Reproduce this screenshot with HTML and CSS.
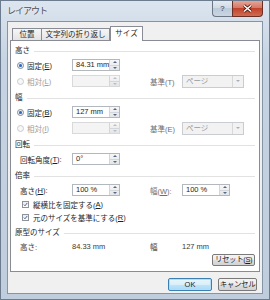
FILE: index.html
```html
<!DOCTYPE html>
<html lang="ja">
<head>
    <meta charset="UTF-8">
    <title>レイアウト</title>
    <link rel="stylesheet" href="styles.css">
</head>
<body>
    <div class="window">
        <div class="titlebar">
            <span class="title">レイアウト</span>
            <div class="caption">
                <span class="cap help">?</span>
                <span class="cap close">
                    <svg width="11" height="9" viewBox="0 0 11 9"><path d="M2 1.5 L9 7.5 M9 1.5 L2 7.5" stroke="#4a1a12" stroke-width="3" fill="none"/><path d="M2 1.5 L9 7.5 M9 1.5 L2 7.5" stroke="#fff" stroke-width="1.6" fill="none"/></svg>
                </span>
            </div>
        </div>

        <div class="client">
            <div class="tabs">
                <span class="tab t1">位置</span>
                <span class="tab t2">文字列の折り返し</span>
                <span class="tab t3 active">サイズ</span>
            </div>

            <div class="panel">
                <div class="head first">高さ</div>
                <div class="row">
                    <span class="c1 opt"><i class="radio on"></i>固定(<u>E</u>)</span>
                    <span class="c2"><span class="num"><span class="val">84.31 mm</span><span class="spin"><b class="up"></b><b class="down"></b></span></span></span>
                </div>
                <div class="row">
                    <span class="c1 opt off"><i class="radio"></i>相対(<u>L</u>)</span>
                    <span class="c2"><span class="num dis"><span class="val"></span><span class="spin"><b class="up"></b><b class="down"></b></span></span></span>
                    <span class="c3">基準(T)</span>
                    <span class="sel"><span class="val">ページ</span><span class="drop"></span></span>
                </div>

                <div class="head">幅</div>
                <div class="row">
                    <span class="c1 opt"><i class="radio on"></i>固定(<u>B</u>)</span>
                    <span class="c2"><span class="num"><span class="val">127 mm</span><span class="spin"><b class="up"></b><b class="down"></b></span></span></span>
                </div>
                <div class="row">
                    <span class="c1 opt off"><i class="radio"></i>相対(<u>I</u>)</span>
                    <span class="c2"><span class="num dis"><span class="val"></span><span class="spin"><b class="up"></b><b class="down"></b></span></span></span>
                    <span class="c3">基準(E)</span>
                    <span class="sel"><span class="val">ページ</span><span class="drop"></span></span>
                </div>

                <div class="head">回転</div>
                <div class="row">
                    <span class="c1 lbl">回転角度(<u>T</u>):</span>
                    <span class="c2"><span class="num"><span class="val">0°</span><span class="spin"><b class="up"></b><b class="down"></b></span></span></span>
                </div>

                <div class="head">倍率</div>
                <div class="row">
                    <span class="c1 lbl">高さ(<u>H</u>):</span>
                    <span class="c2"><span class="num"><span class="val">100 %</span><span class="spin"><b class="up"></b><b class="down"></b></span></span></span>
                    <span class="c3">幅(<u>W</u>):</span>
                    <span class="num"><span class="val">100 %</span><span class="spin"><b class="up"></b><b class="down"></b></span></span>
                </div>
                <div class="check">
                    <i class="box"><svg width="7" height="7" viewBox="0 0 7 7"><path d="M1.2 3.6 L2.8 5.3 L5.9 1.4" stroke="#2f4f80" stroke-width="1.2" fill="none"/></svg></i>縦横比を固定する(<u>A</u>)
                </div>
                <div class="check">
                    <i class="box"><svg width="7" height="7" viewBox="0 0 7 7"><path d="M1.2 3.6 L2.8 5.3 L5.9 1.4" stroke="#2f4f80" stroke-width="1.2" fill="none"/></svg></i>元のサイズを基準にする(<u>R</u>)
                </div>

                <div class="head">原型のサイズ</div>
                <div class="row info">
                    <span class="c1 lbl">高さ:</span>
                    <span class="c2">84.33 mm</span>
                    <span class="c3">幅</span>
                    <span>127 mm</span>
                </div>

                <div class="reset">
                    <button class="btn">リセット(<u>S</u>)</button>
                </div>
            </div>

            <div class="footer">
                <button class="btn ok">OK</button>
                <button class="btn cancel">キャンセル</button>
            </div>
        </div>
    </div>
</body>
</html>
```

FILE: styles.css
```css
* { box-sizing: border-box; }
body { margin: 0; font-family: "Liberation Sans", "Noto Sans CJK JP", sans-serif; font-size: 7.5px; color: #1e1e1e; }
u { text-decoration: underline; text-underline-offset: 1px; }

/* window frame */
.window { width: 270px; height: 300px; border: 1px solid #6c7b8d; background: linear-gradient(#dce5ef, #c6d3e2 60px, #bfcddd); padding: 0 6px 5px; display: flex; flex-direction: column; }
.titlebar { height: 20px; display: flex; justify-content: space-between; align-items: flex-start; }
.title { font-family: "Noto Sans CJK JP", sans-serif; font-size: 9px; letter-spacing: -1px; color: #4a4f57; line-height: 20px; text-shadow: 0 0 3px #eef3f8; }
.caption { display: flex; }
.cap { height: 16px; display: flex; align-items: center; justify-content: center; border: 1px solid #6b7685; border-top: none; }
.help { width: 20px; border-radius: 0 0 0 4px; border-right: none; background: linear-gradient(#e4eaf1, #cfd9e4 50%, #bccad9 50%, #c9d5e2); color: #5c6a7b; font-size: 8px; font-weight: bold; }
.close { width: 31px; border-radius: 0 0 4px 0; border-color: #6a3026; background: linear-gradient(#e6a596, #d57866 45%, #c0432a 50%, #cf6b52); }

.client { flex: 1; background: #f0f0f0; border: 1px solid #8595a8; padding: 0 2px; display: flex; flex-direction: column; }

/* tabs */
.tabs { height: 18px; display: flex; align-items: flex-end; padding-left: 2px; }
.tab { height: 12px; line-height: 11px; text-align: center; border: 1px solid #898c95; border-bottom: none; background: linear-gradient(#f6f6f6, #e4e4e4); color: #1e1e1e; }
.t1 { width: 30px; }
.t2 { width: 69px; margin-left: -1px; }
.t3 { width: 33px; }
.tab.active { height: 15px; line-height: 13px; background: #fff; margin-bottom: -1px; position: relative; z-index: 1; }

.panel { height: 232px; background: #fff; border: 1px solid #898c95; padding: 4px 4px 5px; display: flex; flex-direction: column; }

/* group headings with a rule after them */
.head { height: 12px; line-height: 12px; margin-top: 3px; display: flex; align-items: center; }
.head.first { margin-top: 0; }
.head::after { content: ""; flex: 1; border-top: 1px solid #e2e2e2; margin-left: 4px; }

.row { height: 16px; display: grid; grid-template-columns: 57px 78px 32px auto; align-items: center; }
.c1 { display: flex; align-items: center; white-space: nowrap; }
.opt { padding-left: 2px; }
.lbl { padding-left: 5px; }
.off { color: #9d9d9d; }
.c3 { color: #6e6e6e; white-space: nowrap; }
.row.info { height: 14px; color: #3a3a3a; }
.row.info .c3 { color: #3a3a3a; }

.radio { width: 7px; height: 7px; border-radius: 50%; border: 1px solid #848c97; background: #f4f4f4; margin-right: 3px; display: inline-flex; align-items: center; justify-content: center; }
.radio.on::after { content: ""; width: 3px; height: 3px; border-radius: 50%; background: #2d6bc2; box-shadow: 0 0 1px #7fb0ea; }
.off .radio { border-color: #c8cbd0; background: #f7f7f7; }

/* number boxes with spinners */
.num { width: 48px; height: 12px; display: flex; border: 1px solid #b3b7be; background: #fff; }
.num .val { flex: 1; padding-left: 3px; line-height: 10px; white-space: nowrap; }
.spin { width: 10px; display: flex; flex-direction: column; border-left: 1px solid #d3d6da; background: linear-gradient(#f7f7f7, #e3e5e8); }
.spin b { flex: 1; display: flex; align-items: center; justify-content: center; }
.spin b.up { border-bottom: 1px solid #d3d6da; }
.spin b.up::after { content: ""; border: 2px solid transparent; border-top: none; border-bottom: 2px solid #51688a; }
.spin b.down::after { content: ""; border: 2px solid transparent; border-bottom: none; border-top: 2px solid #51688a; }
.num.dis { border-color: #d9d9d9; background: #f4f4f4; }
.num.dis .spin b::after { border-top-color: #b7bec8; border-bottom-color: #b7bec8; }
.num.dis .spin b.up::after { border-top-color: transparent; }
.num.dis .spin b.down::after { border-bottom-color: transparent; }

.sel { width: 62px; height: 13px; display: flex; border: 1px solid #c9ccd1; background: #f2f2f2; color: #9a9a9a; }
.sel .val { flex: 1; padding-left: 3px; line-height: 11px; }
.drop { width: 11px; border-left: 1px solid #d8d8d8; display: flex; align-items: center; justify-content: center; }
.drop::after { content: ""; border: 2px solid transparent; border-bottom: none; border-top: 2px solid #a7adb6; }

/* checkboxes */
.check { height: 13px; display: flex; align-items: center; padding-left: 7px; white-space: nowrap; }
.box { width: 7px; height: 7px; border: 1px solid #8e9399; background: linear-gradient(#e9ecef, #fdfdfd); margin-right: 4px; display: inline-flex; align-items: center; justify-content: center; }
.box svg { display: block; }

/* buttons */
.btn { font: inherit; color: #1e1e1e; height: 12px; padding: 0; border: 1px solid #7a7a7a; border-radius: 2px; background: linear-gradient(#f4f4f4, #ececec 50%, #dedede 50%, #d2d2d2); line-height: 10px; white-space: nowrap; letter-spacing: -0.4px; }
.reset { margin-top: auto; display: flex; justify-content: flex-end; }
.reset .btn { width: 43px; }
.footer { flex: 1; display: flex; justify-content: flex-end; align-items: flex-start; gap: 6px; padding: 6px 3px 0 0; }
.footer .btn { height: 13px; line-height: 11px; }
.ok { width: 44px; letter-spacing: 0; border-color: #3c7fb1; box-shadow: inset 0 0 0 1px #b6dcf3; background: linear-gradient(#eaf5fc, #d9effa 50%, #bee6fb 50%, #a9d9f5); }
.cancel { width: 39px; }
```
